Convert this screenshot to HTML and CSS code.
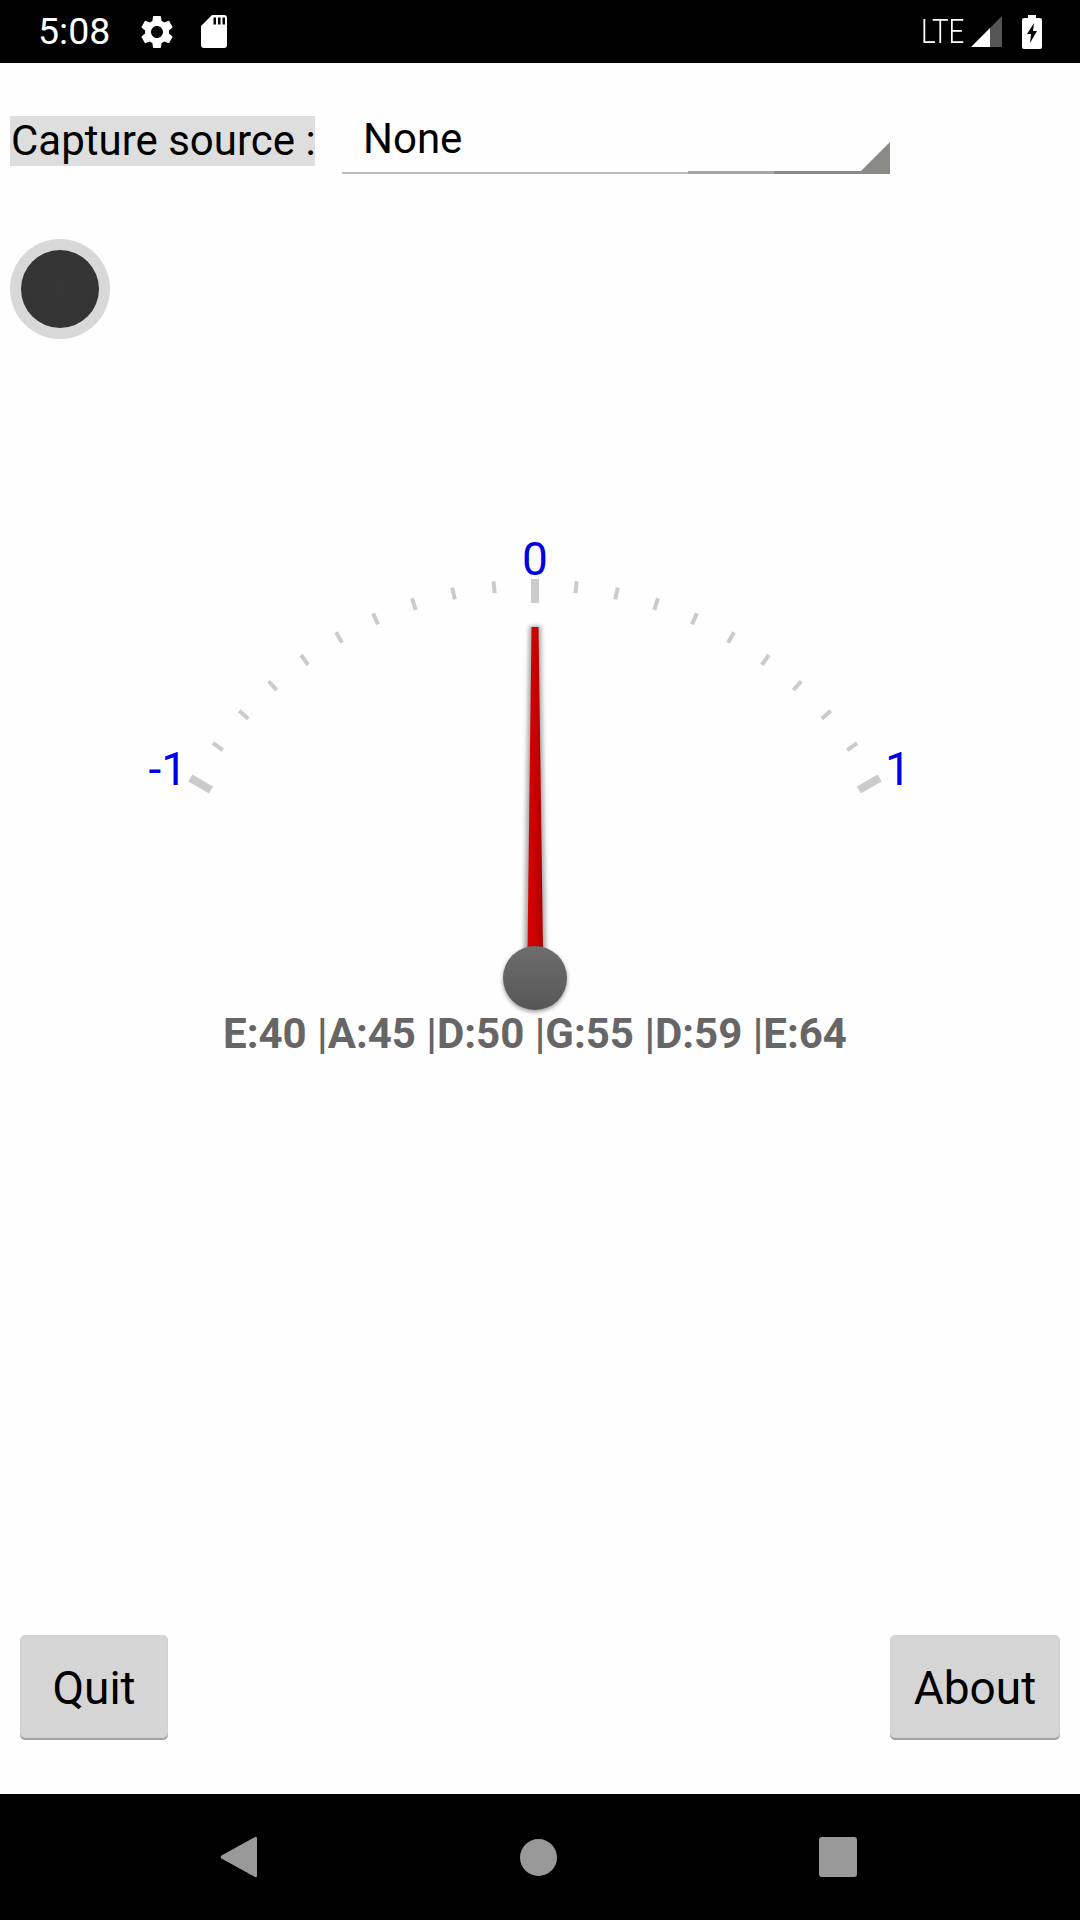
FILE: index.html
```html
<!DOCTYPE html>
<html lang="en">
<head>
	<meta charset="UTF-8">
	<title>Tuner</title>
	<link rel="stylesheet" href="styles.css">
</head>
<body>
	<div class="status">
		<span class="clock">5:08</span>
		<svg class="gear" viewBox="0 0 24 24"><path d="M19.14 12.94c.04-.3.06-.61.06-.94 0-.32-.02-.64-.07-.94l2.03-1.58c.18-.14.23-.41.12-.61l-1.92-3.32c-.12-.22-.37-.29-.59-.22l-2.39.96c-.5-.38-1.03-.7-1.62-.94l-.36-2.54c-.04-.24-.24-.41-.48-.41h-3.84c-.24 0-.43.17-.47.41l-.36 2.54c-.59.24-1.13.57-1.62.94l-2.39-.96c-.22-.08-.47 0-.59.22L2.74 8.87c-.12.21-.08.47.12.61l2.03 1.58c-.05.3-.09.63-.09.94s.02.64.07.94l-2.03 1.58c-.18.14-.23.41-.12.61l1.92 3.32c.12.22.37.29.59.22l2.39-.96c.5.38 1.03.7 1.62.94l.36 2.54c.05.24.24.41.48.41h3.84c.24 0 .44-.17.47-.41l.36-2.54c.59-.24 1.13-.56 1.62-.94l2.39.96c.22.08.47 0 .59-.22l1.92-3.32c.12-.22.07-.47-.12-.61l-2.01-1.58zM12 15.6c-1.98 0-3.6-1.62-3.6-3.6s1.62-3.6 3.6-3.6 3.6 1.62 3.6 3.6-1.62 3.6-3.6 3.6z"/></svg>
		<svg class="sdcard" viewBox="0 0 26 33"><path fill-rule="evenodd" d="M11 0h12a3 3 0 0 1 3 3v27a3 3 0 0 1-3 3H3a3 3 0 0 1-3-3V11zM12.500 2.500v7H15v-7zM17 2.500v7h2.500v-7zM21.500 2.500v7H24v-7z"/></svg>
		<span class="lte">LTE</span>
		<svg class="signal" viewBox="0 0 31 31"><path class="signal-off" d="M19 12 31 0v31H19z"/><path class="signal-on" d="M0 31 19 12v19z"/></svg>
		<svg class="battery" viewBox="0 0 20 34"><path fill-rule="evenodd" d="M6 0h8v3h4a2 2 0 0 1 2 2v27a2 2 0 0 1-2 2H2a2 2 0 0 1-2-2V5a2 2 0 0 1 2-2h4zM12 8 5 19h4l-1 9 7-12h-4z"/></svg>
	</div>

	<div class="main">
		<div class="source-row">
			<span class="source-label">Capture source :</span>
			<div class="spinner">
				<span class="spinner-value">None</span>
				<svg class="spinner-edge" viewBox="0 0 548 32">
					<path class="edge-light" d="M0 30h346v2H0z"/>
					<path class="edge-mid" d="M346 29h86v3h-86z"/>
					<path class="edge-dark" d="M432 29h87L548 0v32H432z"/>
				</svg>
			</div>
		</div>

		<div class="record"><div class="record-dot"></div></div>

		<svg class="gauge" viewBox="0 530 1080 479">
			<defs>
				<rect id="tick" x="533" y="579" width="4" height="12"/>
				<rect id="tick-major" x="531" y="579" width="8" height="24"/>
				<linearGradient id="needle-fill" x1="0" x2="1" y1="0" y2="0">
					<stop offset="0" stop-color="#d80404"/>
					<stop offset=".6" stop-color="#c40000"/>
					<stop offset="1" stop-color="#a80000"/>
				</linearGradient>
				<linearGradient id="knob-fill" x1="0" x2="0" y1="0" y2="1">
					<stop offset="0" stop-color="#6e6e6e"/>
					<stop offset="1" stop-color="#565656"/>
				</linearGradient>
			</defs>
			<g class="ticks">
				<use href="#tick-major" transform="rotate(-60 535 977)"/>
				<use href="#tick" transform="rotate(-54 535 977)"/>
				<use href="#tick" transform="rotate(-48 535 977)"/>
				<use href="#tick" transform="rotate(-42 535 977)"/>
				<use href="#tick" transform="rotate(-36 535 977)"/>
				<use href="#tick" transform="rotate(-30 535 977)"/>
				<use href="#tick" transform="rotate(-24 535 977)"/>
				<use href="#tick" transform="rotate(-18 535 977)"/>
				<use href="#tick" transform="rotate(-12 535 977)"/>
				<use href="#tick" transform="rotate(-6 535 977)"/>
				<use href="#tick-major"/>
				<use href="#tick" transform="rotate(6 535 977)"/>
				<use href="#tick" transform="rotate(12 535 977)"/>
				<use href="#tick" transform="rotate(18 535 977)"/>
				<use href="#tick" transform="rotate(24 535 977)"/>
				<use href="#tick" transform="rotate(30 535 977)"/>
				<use href="#tick" transform="rotate(36 535 977)"/>
				<use href="#tick" transform="rotate(42 535 977)"/>
				<use href="#tick" transform="rotate(48 535 977)"/>
				<use href="#tick" transform="rotate(54 535 977)"/>
				<use href="#tick-major" transform="rotate(60 535 977)"/>
			</g>
			<text class="gauge-label" x="535" y="575" text-anchor="middle">0</text>
			<text class="gauge-label" x="187" y="785" text-anchor="end">-1</text>
			<text class="gauge-label" x="885" y="785">1</text>
			<path class="needle-shadow" d="M529 626h12l5 324h-22z"/>
			<path fill="url(#needle-fill)" d="M531.500 627h7l4.500 323h-15.500z"/>
			<circle class="knob" cx="535" cy="978" r="32" fill="url(#knob-fill)"/>
		</svg>

		<div class="strings">E:40 |A:45 |D:50 |G:55 |D:59 |E:64</div>

		<div class="actions">
			<button class="action action-quit">Quit</button>
			<button class="action action-about">About</button>
		</div>
	</div>

	<div class="nav">
		<svg class="nav-back" viewBox="0 0 37 42"><path d="M35 1 1.500 19.500a2 2 0 0 0 0 3L35 41a1.500 1.500 0 0 0 2-1V2a1.500 1.500 0 0 0-2-1z"/></svg>
		<div class="nav-home"></div>
		<div class="nav-recent"></div>
	</div>
</body>
</html>
```

FILE: styles.css
```css
*{
	margin: 0;
	padding: 0;
	border: 0;
	box-sizing: border-box;
}
html, body{
	width: 1080px;
	height: 1920px;
}
body{
	display: flex;
	flex-direction: column;
	font-family: Roboto, sans-serif;
	background: #fefefe;
	overflow: hidden;
}

/* status bar */
.status{
	display: flex;
	align-items: center;
	flex: 0 0 63px;
	padding: 0 38px;
	background: #000;
	color: #fff;
}
.status svg{
	fill: #fff;
	flex: none;
}
.clock{
	width: 72px;
	font-size: 37.500px;
	line-height: 63px;
	white-space: nowrap;
}
.gear{
	width: 40px;
	height: 40px;
	margin-left: 27px;
}
.sdcard{
	width: 26px;
	height: 33px;
	margin-left: 24px;
}
.lte{
	width: 42px;
	margin-left: auto;
	font-size: 33px;
	font-weight: 300;
	line-height: 1;
	transform: scaleX(.84);
	transform-origin: left center;
}
.signal{
	width: 31px;
	height: 31px;
	margin-left: 8px;
}
.status .signal-off{
	fill: #555;
}
.status .signal-on{
	fill: #fff;
}
.battery{
	width: 20px;
	height: 34px;
	margin-left: 20px;
}

/* main */
.main{
	display: flex;
	flex-direction: column;
	flex: 1;
}
.source-row{
	display: flex;
	margin: 53px 0 0 10px;
}
.source-label{
	flex: none;
	width: 305px;
	height: 50px;
	padding-left: 1px;
	background: #dedede;
	font-size: 42px;
	line-height: 50px;
	color: #000;
	white-space: nowrap;
}
.spinner{
	position: relative;
	width: 548px;
	height: 58px;
	margin-left: 27px;
}
.spinner-value{
	display: block;
	padding-left: 21px;
	font-size: 42px;
	line-height: 46px;
	color: #000;
}
.spinner-edge{
	position: absolute;
	right: 0;
	bottom: 0;
	width: 548px;
	height: 32px;
}
.edge-light{
	fill: #bdbdb6;
}
.edge-mid{
	fill: #a4a4a6;
}
.edge-dark{
	fill: #8a8a86;
}

.record{
	display: flex;
	align-items: center;
	justify-content: center;
	width: 100px;
	height: 100px;
	margin: 65px 0 0 10px;
	border-radius: 50%;
	background: #d8d8d8;
}
.record-dot{
	width: 78px;
	height: 78px;
	border-radius: 50%;
	background: radial-gradient(circle, #363636 0, #343434 78%, #1e1e1e 100%);
}

/* gauge */
.gauge{
	flex: none;
	display: block;
	width: 1080px;
	height: 479px;
	margin-top: 191px;
	overflow: visible;
}
.ticks{
	fill: #cbcbcb;
}
.gauge-label{
	font-size: 46px;
	fill: #0000e6;
}
.needle-shadow{
	fill: #aaa;
	filter: blur(2px);
}
.knob{
	filter: drop-shadow(0 2px 2px rgba(0, 0, 0, .4));
}
.strings{
	width: 1070px;
	font-size: 42px;
	font-weight: 700;
	line-height: 50px;
	text-align: center;
	color: #666;
	white-space: nowrap;
}

/* buttons */
.actions{
	display: flex;
	justify-content: space-between;
	margin-top: auto;
	padding: 0 20px 54px;
}
.action{
	height: 105px;
	border-radius: 5px;
	background: #d5d5d5;
	box-shadow: inset 0 -2px 1px #a0a0a0;
	font: 46px Roboto, sans-serif;
	color: #000;
}
.action-quit{
	width: 148px;
}
.action-about{
	width: 170px;
}

/* nav bar */
.nav{
	display: flex;
	align-items: center;
	justify-content: space-between;
	flex: 0 0 126px;
	padding: 0 223px 0 220px;
	background: #000;
}
.nav-back{
	width: 37px;
	height: 42px;
	fill: #999;
}
.nav-home{
	width: 37px;
	height: 37px;
	border-radius: 50%;
	background: #999;
}
.nav-recent{
	width: 38px;
	height: 40px;
	border-radius: 3px;
	background: #999;
}
```
